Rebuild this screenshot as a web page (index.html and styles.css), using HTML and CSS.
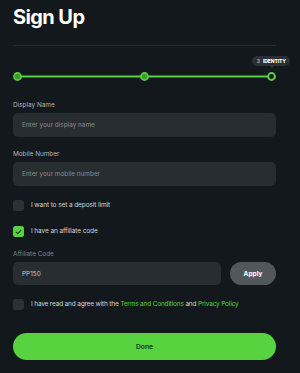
FILE: index.html
```html
<!DOCTYPE html>
<html>
<head>
<meta charset="utf-8">
<link rel="stylesheet" href="styles.css">
</head>
<body>
<div class="page">
  <h1 class="title">Sign Up</h1>
  <div class="divider"></div>
  <div class="stepper">
    <svg class="steps" width="263" height="9" viewBox="0 0 263 9">
      <line x1="4.5" y1="4.5" x2="258.5" y2="4.5" stroke="#57d33f" stroke-width="2"/>
      <circle cx="4.5" cy="4.5" r="3.6" fill="#3c9c2b" stroke="#57d33f" stroke-width="1.6"/>
      <circle cx="131.5" cy="4.5" r="3.6" fill="#3c9c2b" stroke="#57d33f" stroke-width="1.6"/>
      <circle cx="258.5" cy="4.5" r="3.4" fill="#12181b" stroke="#57d33f" stroke-width="2"/>
    </svg>
    <span class="badge"><span class="badge-num">3</span>IDENTITY</span>
  </div>

  <div class="field first">
    <label class="label">Display Name</label>
    <div class="input placeholder">Enter your display name</div>
  </div>
  <div class="field second">
    <label class="label">Mobile Number</label>
    <div class="input placeholder">Enter your mobile number</div>
  </div>

  <div class="check-row deposit">
    <span class="box"></span>
    <span class="check-text">I want to set a deposit limit</span>
  </div>
  <div class="check-row affiliate-check">
    <span class="box checked">
      <svg width="7" height="6" viewBox="0 0 7 6"><path d="M1.1 3.2 L2.7 4.7 L5.9 1.3" fill="none" stroke="#1a2a12" stroke-width="1.1" stroke-linecap="round" stroke-linejoin="round"/></svg>
    </span>
    <span class="check-text">I have an affiliate code</span>
  </div>

  <div class="field affiliate">
    <label class="label dim">Affiliate Code</label>
    <div class="code-row">
      <div class="input value">PP150</div>
      <button class="apply">Apply</button>
    </div>
  </div>

  <div class="check-row terms">
    <span class="box"></span>
    <span class="check-text tight">I have read and agree with the <a class="link">Terms and Conditions</a> and <a class="link">Privacy Policy</a></span>
  </div>

  <button class="done">Done</button>
</div>
</body>
</html>
```
FILE: styles.css
```css
html, body {
  margin: 0;
  padding: 0;
  background: #12181b;
}
body {
  font-family: Inter, "Noto Sans", sans-serif;
  color: #e6e8e9;
  width: 300px;
  height: 373px;
  overflow: hidden;
}
.page {
  padding: 5px 24px 0 13px;
  display: flex;
  flex-direction: column;
}
.title {
  margin: 0;
  font-size: 20px;
  line-height: 24px;
  font-weight: 700;
  letter-spacing: -0.6px;
  color: #ffffff;
}
.divider {
  height: 1px;
  background: #252b2e;
  margin-top: 16px;
}
.stepper {
  position: relative;
  margin-top: 26px;
  height: 9px;
}
.steps {
  display: block;
}
.badge {
  position: absolute;
  bottom: 15px;
  right: -14px;
  background: #2a3034;
  color: #ffffff;
  font-size: 5px;
  font-weight: 800;
  line-height: 10px;
  padding: 0 4px 0 5px;
  border-radius: 5px;
  white-space: nowrap;
  display: flex;
  gap: 3px;
  letter-spacing: -0.1px;
}
.badge::after {
  content: "";
  position: absolute;
  right: 16px;
  bottom: -2px;
  border-left: 2px solid transparent;
  border-right: 2px solid transparent;
  border-top: 2px solid #2a3034;
}
.badge-num {
  color: #9aa0a3;
}
.field {
  display: flex;
  flex-direction: column;
}
.field.first {
  margin-top: 20px;
}
.field.second {
  margin-top: 13px;
}
.label {
  font-size: 6.4px;
  line-height: 9px;
  color: #b3b7b9;
  margin-bottom: 3px;
}
.label.dim {
  color: #7d8387;
}
.input {
  height: 24px;
  border-radius: 5px;
  background: #272d31;
  box-sizing: border-box;
  padding: 0 9px;
  display: flex;
  align-items: center;
  font-size: 6.4px;
}
.placeholder {
  color: #868c90;
}
.value {
  color: #c4c8ca;
  flex: 1;
  height: 23px;
}
.check-row {
  display: flex;
  align-items: center;
  gap: 7px;
}
.deposit {
  margin-top: 14px;
}
.affiliate-check {
  margin-top: 15px;
}
.box {
  width: 11px;
  height: 11px;
  border-radius: 2.5px;
  background: #2b3135;
  flex: none;
  display: flex;
  align-items: center;
  justify-content: center;
}
.box.checked {
  background: #57d33f;
}
.check-text {
  font-size: 6.5px;
  line-height: 11px;
  color: #d3d6d8;
  white-space: nowrap;
  letter-spacing: -0.1px;
}
.check-text.tight {
  letter-spacing: -0.18px;
}
.link {
  color: #57d33f;
}
.affiliate {
  margin-top: 13px;
}
.code-row {
  display: flex;
  align-items: center;
  gap: 9px;
}
.apply {
  width: 46px;
  height: 23px;
  border: none;
  border-radius: 12px;
  background: #52575b;
  color: #ffffff;
  font-family: Inter, sans-serif;
  font-size: 6.5px;
  font-weight: 700;
  padding: 0;
}
.terms {
  margin-top: 14px;
}
.done {
  margin-top: 23px;
  height: 27px;
  border: none;
  border-radius: 14px;
  background: #57d33f;
  color: #1d3517;
  font-family: Inter, sans-serif;
  font-size: 6.8px;
  font-weight: 600;
  padding: 0;
}
```
